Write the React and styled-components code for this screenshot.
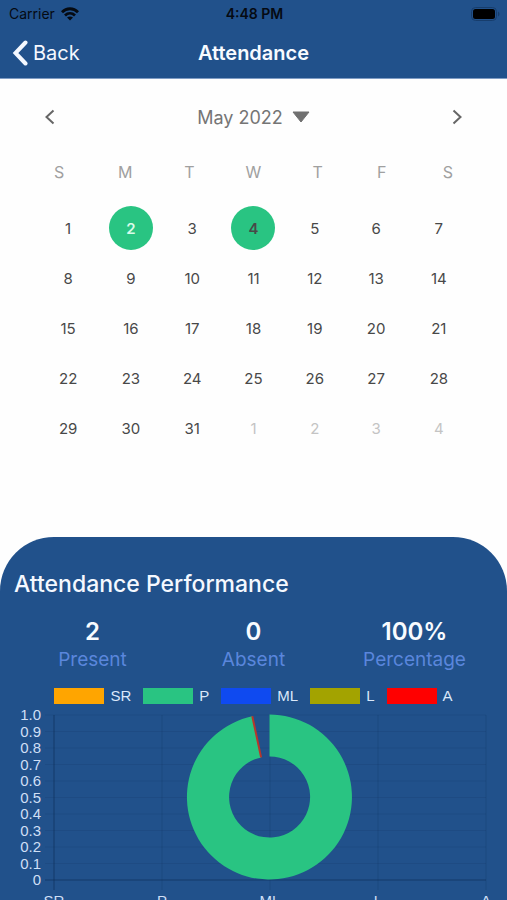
import React, { useState } from 'react';
import styled, { createGlobalStyle } from 'styled-components';

const GlobalStyle = createGlobalStyle`
  * {
    box-sizing: border-box;
  }

  body {
    margin: 0;
    background: #fefefe;
    font-family: Inter, 'Liberation Sans', sans-serif;
  }

  button {
    padding: 0;
    border: none;
    background: none;
    font-family: inherit;
    cursor: pointer;
  }
`;

const Screen = styled.div`
  display: flex;
  flex-direction: column;
  height: 100vh;
  overflow: hidden;
`;

const Header = styled.header`
  background: #21518b;
  border-bottom: 1px solid #7f9cc4;
`;

const StatusBar = styled.div`
  display: grid;
  grid-template-columns: 1fr auto 1fr;
  align-items: center;
  height: 27px;
  padding: 0 7px 0 9px;
  font-size: 14px;
  color: #050a12;
`;

const Carrier = styled.div`
  display: flex;
  align-items: center;
  gap: 6px;
`;

const Clock = styled.time`
  font-weight: 600;
`;

const BatteryIcon = styled.svg`
  justify-self: end;
`;

const NavBar = styled.div`
  display: grid;
  grid-template-columns: 1fr auto 1fr;
  align-items: center;
  height: 51px;
  padding: 0 12px;
`;

const BackButton = styled.button`
  display: flex;
  align-items: center;
  justify-self: start;
  gap: 5px;
  color: #f4f8ff;
  font-size: 20px;
`;

const Title = styled.h1`
  margin: 0;
  color: #f8fbff;
  font-size: 20px;
  font-weight: 600;
`;

const Calendar = styled.section`
  height: 458px;
  flex: none;
`;

const MonthBar = styled.div`
  display: flex;
  align-items: center;
  justify-content: space-between;
  height: 76px;
  padding: 0 44px;
`;

const ArrowButton = styled.button`
  display: flex;
`;

const MonthButton = styled.button`
  display: flex;
  align-items: center;
  gap: 9px;
  color: #757575;
  font-size: 18px;
`;

const Weekdays = styled.div`
  display: grid;
  grid-template-columns: 68fr repeat(5, 64fr) 68fr;
  height: 34px;
  padding: 0 25px;
  align-items: center;
  text-align: center;
  color: #a0a0a0;
  font-size: 16px;
`;

const Days = styled.div`
  display: grid;
  grid-template-columns: 64fr repeat(5, 61fr) 64fr;
  grid-auto-rows: 50px;
  place-items: center;
  padding: 14px 36px 0;
`;

const Day = styled.button`
  width: 44px;
  height: 44px;
  border-radius: 50%;
  font-size: 15px;
  color: ${(props) => (props.$outside ? '#c4c4c4' : '#484848')};
  background: ${(props) => (props.$present ? '#29c482' : 'transparent')};
  font-weight: ${(props) => (props.$present ? 600 : 400)};
  ${(props) => props.$selected && 'color: #d9fbe9;'}
`;

const Performance = styled.section`
  flex: 1;
  padding-top: 30px;
  border-radius: 54px 54px 0 0;
  background: #21518b;
  overflow: hidden;
`;

const PerformanceTitle = styled.h2`
  margin: 0;
  padding: 0 14px;
  color: #f4f8ff;
  font-size: 23px;
  font-weight: 500;
  line-height: 34px;
`;

const Stats = styled.dl`
  display: grid;
  grid-template-columns: repeat(3, 1fr);
  margin: 0;
  padding: 17px 12px 13px;
  text-align: center;
`;

const Stat = styled.div`
  display: flex;
  flex-direction: column-reverse;
`;

const StatValue = styled.dd`
  margin: 0;
  color: #f8fbff;
  font-size: 24px;
  font-weight: 600;
  line-height: 28px;
`;

const StatLabel = styled.dt`
  color: #5a86dc;
  font-size: 19px;
  line-height: 28px;
`;

const Legend = styled.ul`
  display: flex;
  justify-content: center;
  gap: 12px;
  margin: 0;
  padding: 0;
  list-style: none;
  color: #dbe8fa;
  font-family: 'Liberation Sans', Arial, sans-serif;
  font-size: 15px;
  line-height: 18px;
`;

const LegendItem = styled.li`
  display: flex;
  align-items: center;
  gap: 6px;

  &::before {
    content: '';
    width: 50px;
    height: 16px;
    background: ${(props) => props.$color};
  }
`;

const Chart = styled.svg`
  display: block;
  width: 100%;
  font-family: 'Liberation Sans', Arial, sans-serif;
  font-size: 15px;
  fill: #cfdff5;
`;

const weekdays = ['S', 'M', 'T', 'W', 'T', 'F', 'S'];

const presentDays = [2, 4];

const days = Array.from({ length: 35 }, (_, i) => ({
  number: i < 31 ? i + 1 : i - 30,
  outside: i >= 31
}));

const stats = [
  { label: 'Present', value: '2' },
  { label: 'Absent', value: '0' },
  { label: 'Percentage', value: '100%' }
];

const categories = [
  { label: 'SR', color: '#ffa500' },
  { label: 'P', color: '#29c482' },
  { label: 'ML', color: '#0f4af0' },
  { label: 'L', color: '#a3a300' },
  { label: 'A', color: '#ff0000' }
];

const ticks = ['1.0', '0.9', '0.8', '0.7', '0.6', '0.5', '0.4', '0.3', '0.2', '0.1', '0'];

const tickY = (i) => 10 + i * 16.5;
const columnX = (i) => 54 + i * 108;

function AttendanceChart() {
  return (
    <Chart viewBox="0 0 507 206" role="img" aria-label="Attendance by type">
      {ticks.map((tick, i) => (
        <g key={tick}>
          <line
            x1="45"
            x2="486"
            y1={tickY(i)}
            y2={tickY(i)}
            stroke="#0b2b55"
            strokeOpacity={tick === '0' ? 0.6 : 0.14}
          />
          <text x="41" y={tickY(i) + 5} textAnchor="end">{tick}</text>
        </g>
      ))}
      {categories.map(({ label }, i) => (
        <g key={label}>
          <line
            x1={columnX(i)}
            x2={columnX(i)}
            y1="10"
            y2="185"
            stroke="#0b2b55"
            strokeOpacity={i === 0 ? 0.6 : 0.2}
          />
          <text x={columnX(i)} y="201" textAnchor="middle">{label}</text>
        </g>
      ))}
      <path
        d="M269.5 9.5 A82.5 82.5 0 1 1 252.3 11.3 L261.1 52.4 A40.5 40.5 0 1 0 269.5 51.5 Z"
        fill="#29c482"
      />
      <path d="M252.3 11.3 L261.1 52.4" stroke="#b8352b" strokeWidth="2" />
    </Chart>
  );
}

function App() {
  const [selected, setSelected] = useState(2);

  return (
    <Screen>
      <GlobalStyle />
      <Header>
        <StatusBar>
          <Carrier>
            Carrier
            <svg width="18" height="14" viewBox="0 0 18 14" fill="none" stroke="currentColor" strokeWidth="2.8">
              <path d="M1 5.2 C5.5 0.6 12.5 0.6 17 5.2" />
              <path d="M4 8.4 C6.9 5.6 11.1 5.6 14 8.4" />
              <path d="M9 13.6 L6 10.6 C7.8 9.2 10.2 9.2 12 10.6 Z" fill="currentColor" stroke="none" />
            </svg>
          </Carrier>
          <Clock>4:48 PM</Clock>
          <BatteryIcon width="29" height="14" viewBox="0 0 29 14">
            <rect x="0.5" y="0.5" width="25" height="13" rx="4" fill="none" stroke="#173d6c" />
            <rect x="2" y="2" width="22" height="10" rx="2.5" fill="#000" />
            <path d="M27 4.5 C29 5.5 29 8.5 27 9.5 Z" fill="#173d6c" />
          </BatteryIcon>
        </StatusBar>
        <NavBar>
          <BackButton type="button">
            <svg width="16" height="26" viewBox="0 0 16 26" fill="none" stroke="currentColor" strokeWidth="4">
              <path d="M13.5 2.5 L3.5 13 L13.5 23.5" strokeLinecap="round" strokeLinejoin="miter" />
            </svg>
            Back
          </BackButton>
          <Title>Attendance</Title>
        </NavBar>
      </Header>

      <Calendar>
        <MonthBar>
          <ArrowButton type="button" aria-label="Previous month">
            <svg width="12" height="16" viewBox="0 0 12 16" fill="none" stroke="#666" strokeWidth="2">
              <path d="M9.5 1.5 L2.5 8 L9.5 14.5" />
            </svg>
          </ArrowButton>
          <MonthButton type="button">
            May 2022
            <svg width="18" height="12" viewBox="0 0 18 12" fill="#707070" stroke="#707070" strokeLinejoin="round">
              <path d="M1 1 H17 L9 11 Z" />
            </svg>
          </MonthButton>
          <ArrowButton type="button" aria-label="Next month">
            <svg width="12" height="16" viewBox="0 0 12 16" fill="none" stroke="#666" strokeWidth="2">
              <path d="M2.5 1.5 L9.5 8 L2.5 14.5" />
            </svg>
          </ArrowButton>
        </MonthBar>
        <Weekdays>
          {weekdays.map((day, index) => (
            <span key={index}>{day}</span>
          ))}
        </Weekdays>
        <Days>
          {days.map(({ number, outside }, index) => (
            <Day
              key={index}
              type="button"
              $outside={outside}
              $present={!outside && presentDays.includes(number)}
              $selected={!outside && number === selected}
              onClick={() => setSelected(number)}
            >
              {number}
            </Day>
          ))}
        </Days>
      </Calendar>

      <Performance>
        <PerformanceTitle>Attendance Performance</PerformanceTitle>
        <Stats>
          {stats.map(({ label, value }) => (
            <Stat key={label}>
              <StatLabel>{label}</StatLabel>
              <StatValue>{value}</StatValue>
            </Stat>
          ))}
        </Stats>
        <Legend>
          {categories.map(({ label, color }) => (
            <LegendItem key={label} $color={color}>{label}</LegendItem>
          ))}
        </Legend>
        <AttendanceChart />
      </Performance>
    </Screen>
  );
}

export default App;
